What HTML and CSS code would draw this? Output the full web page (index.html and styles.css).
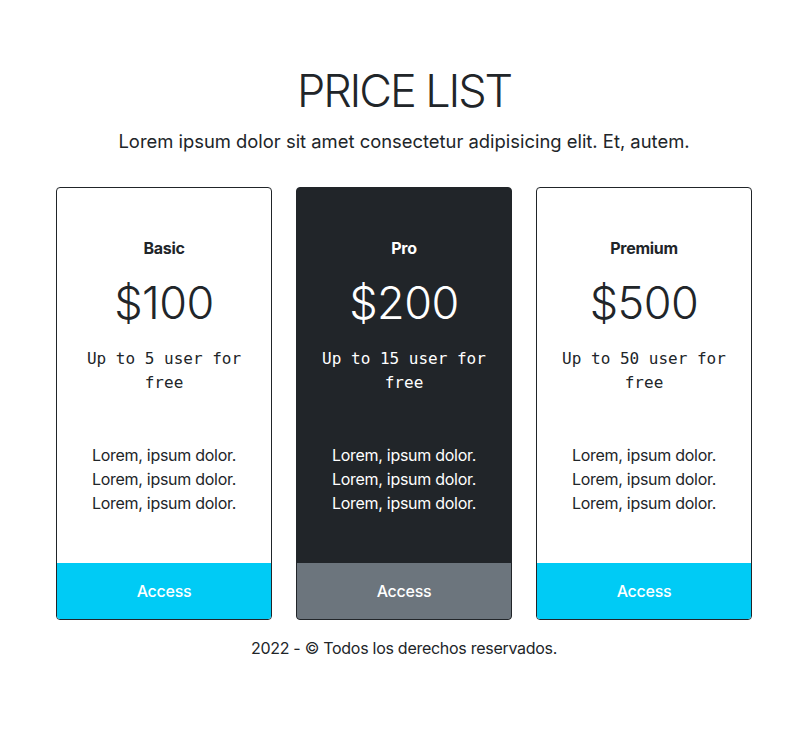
FILE: index.html
```html
<!DOCTYPE html>
<html lang="en">
<head>
    <meta charset="UTF-8">
    <meta name="viewport" content="width=device-width, initial-scale=1.0">
    <title>Price List</title>
    <link rel="stylesheet" href="styles.css">
</head>
<body>
    <div class="container">
        <header class="heading">
            <h1 class="title">PRICE LIST</h1>
            <p class="lead">Lorem ipsum dolor sit amet consectetur adipisicing elit. Et, autem.</p>
        </header>

        <div class="plans">
            <div class="card">
                <div class="card-body">
                    <h5 class="plan-name">Basic</h5>
                    <div class="price">$100</div>
                    <p class="users">Up to 5 user for free</p>
                    <ul class="features">
                        <li>Lorem, ipsum dolor.</li>
                        <li>Lorem, ipsum dolor.</li>
                        <li>Lorem, ipsum dolor.</li>
                    </ul>
                </div>
                <a href="#" class="access">Access</a>
            </div>

            <div class="card card-dark">
                <div class="card-body">
                    <h5 class="plan-name">Pro</h5>
                    <div class="price">$200</div>
                    <p class="users">Up to 15 user for free</p>
                    <ul class="features">
                        <li>Lorem, ipsum dolor.</li>
                        <li>Lorem, ipsum dolor.</li>
                        <li>Lorem, ipsum dolor.</li>
                    </ul>
                </div>
                <a href="#" class="access access-gray">Access</a>
            </div>

            <div class="card">
                <div class="card-body">
                    <h5 class="plan-name">Premium</h5>
                    <div class="price">$500</div>
                    <p class="users">Up to 50 user for free</p>
                    <ul class="features">
                        <li>Lorem, ipsum dolor.</li>
                        <li>Lorem, ipsum dolor.</li>
                        <li>Lorem, ipsum dolor.</li>
                    </ul>
                </div>
                <a href="#" class="access">Access</a>
            </div>
        </div>

        <footer class="footer">2022 - &copy; Todos los derechos reservados.</footer>
    </div>
</body>
</html>
```

FILE: styles.css
```css
body {
    margin: 0;
    background-color: #fff;
    color: #212529;
    font-family: Inter, "Noto Sans", sans-serif;
    font-size: 16px;
    line-height: 1.5;
    letter-spacing: -0.28px;
}
.container {
    width: 696px;
    margin: 0 auto;
    padding: 64px 0 0;
}
.heading {
    text-align: center;
}
.title {
    margin: 0;
    font-size: 45px;
    font-weight: 300;
    line-height: 54px;
    letter-spacing: -2.1px;
}
.lead {
    margin: 10px 0 0;
    font-size: 18.4px;
    font-weight: 400;
    line-height: 27px;
    letter-spacing: 0;
}
.plans {
    display: grid;
    grid-template-columns: repeat(3, 1fr);
    gap: 24px;
    margin-top: 32px;
}
.card {
    display: flex;
    flex-direction: column;
    border: 1px solid #212529;
    border-radius: 4px;
    overflow: hidden;
    background-color: #fff;
    text-align: center;
}
.card-dark {
    background-color: #212529;
    color: #fff;
}
.card-body {
    flex: 1;
    padding: 48px 16px 48px;
}
.plan-name {
    margin: 0;
    font-size: 16px;
    font-weight: 700;
    line-height: 24px;
}
.price {
    margin-top: 16px;
    font-size: 45px;
    font-weight: 300;
    line-height: 54px;
    letter-spacing: -0.5px;
}
.users {
    margin: 17px 0 0;
    font-family: "DejaVu Sans Mono", "Liberation Mono", monospace;
    font-size: 16px;
    line-height: 24px;
    letter-spacing: 0;
}
.features {
    list-style: none;
    margin: 48px 0 0;
    padding: 0;
    line-height: 24px;
}
.access {
    display: block;
    padding: 16px 0;
    background-color: #00cbf5;
    color: #fff;
    text-decoration: none;
    font-weight: 500;
    line-height: 24px;
}
.access-gray {
    background-color: #6c757d;
}
.footer {
    margin-top: 16px;
    text-align: center;
    line-height: 24px;
}
```
